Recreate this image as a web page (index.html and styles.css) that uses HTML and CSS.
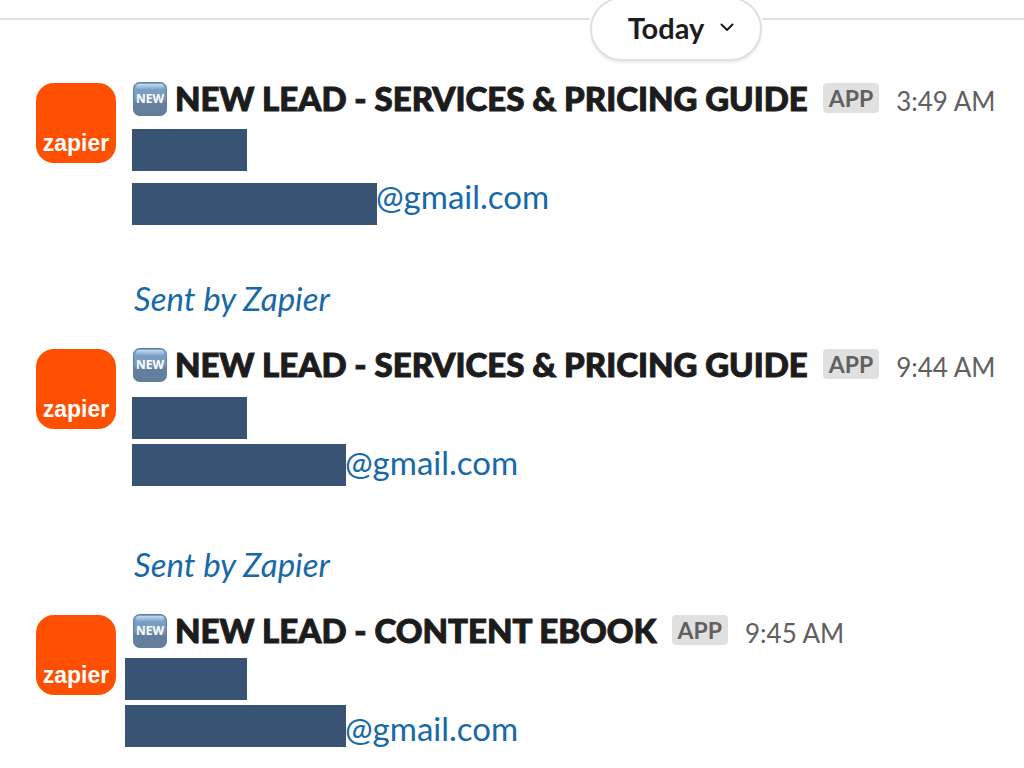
FILE: index.html
```html
<!DOCTYPE html>
<html lang="en">
<head>
<meta charset="utf-8">
<meta name="viewport" content="width=device-width, initial-scale=1">
<title>Lead notifications</title>
<link rel="stylesheet" href="styles.css">
</head>
<body>
<svg class="defs" width="0" height="0" aria-hidden="true">
  <defs>
    <linearGradient id="emoji-face" x1="0" y1="0" x2="0" y2="1">
      <stop offset="0" stop-color="#7ba3cb"/>
      <stop offset="0.5" stop-color="#7899bd"/>
      <stop offset="0.62" stop-color="#64809f"/>
      <stop offset="1" stop-color="#647c98"/>
    </linearGradient>
    <linearGradient id="emoji-shine" x1="0" y1="0" x2="0" y2="1">
      <stop offset="0" stop-color="#c4d9ea"/>
      <stop offset="1" stop-color="#84aacf"/>
    </linearGradient>
  </defs>
</svg>
<header class="day">
  <button class="day-button" type="button">
    <span>Today</span>
    <svg class="chevron" viewBox="0 0 14 9" aria-hidden="true"><path d="M1.500 1.500l5.500 5.500 5.500-5.500"/></svg>
  </button>
</header>
<main class="messages">
  <article class="message">
    <div class="avatar">zapier</div>
    <div class="body">
      <div class="heading">
        <svg class="emoji" viewBox="0 0 34 34" role="img" aria-label="new"><rect x="0.5" y="0.5" width="33" height="33" rx="6" fill="url(#emoji-face)" stroke="#607e9e"/><rect x="3" y="2" width="28" height="5" rx="2.5" fill="url(#emoji-shine)"/><text x="17" y="21" class="emoji-text">NEW</text></svg>
        <h2 class="title">NEW LEAD - SERVICES &amp; PRICING GUIDE</h2>
        <span class="badge">APP</span>
        <time class="time">3:49 AM</time>
      </div>
      <div class="name name-mid"><span class="redacted w-short"></span></div>
      <div class="email email-low"><span class="redacted w-long"></span><a class="link" href="#">@gmail.com</a></div>
      <a class="link sent" href="#">Sent by Zapier</a>
    </div>
  </article>
  <article class="message">
    <div class="avatar">zapier</div>
    <div class="body">
      <div class="heading">
        <svg class="emoji" viewBox="0 0 34 34" role="img" aria-label="new"><rect x="0.5" y="0.5" width="33" height="33" rx="6" fill="url(#emoji-face)" stroke="#607e9e"/><rect x="3" y="2" width="28" height="5" rx="2.5" fill="url(#emoji-shine)"/><text x="17" y="21" class="emoji-text">NEW</text></svg>
        <h2 class="title">NEW LEAD - SERVICES &amp; PRICING GUIDE</h2>
        <span class="badge">APP</span>
        <time class="time">9:44 AM</time>
      </div>
      <div class="name name-low"><span class="redacted w-short"></span></div>
      <div class="email email-mid"><span class="redacted w-medium"></span><a class="link" href="#">@gmail.com</a></div>
      <a class="link sent" href="#">Sent by Zapier</a>
    </div>
  </article>
  <article class="message">
    <div class="avatar">zapier</div>
    <div class="body">
      <div class="heading">
        <svg class="emoji" viewBox="0 0 34 34" role="img" aria-label="new"><rect x="0.5" y="0.5" width="33" height="33" rx="6" fill="url(#emoji-face)" stroke="#607e9e"/><rect x="3" y="2" width="28" height="5" rx="2.5" fill="url(#emoji-shine)"/><text x="17" y="21" class="emoji-text">NEW</text></svg>
        <h2 class="title">NEW LEAD - CONTENT EBOOK</h2>
        <span class="badge">APP</span>
        <time class="time">9:45 AM</time>
      </div>
      <div class="name name-high outdent"><span class="redacted w-name"></span></div>
      <div class="email outdent"><span class="redacted w-email"></span><a class="link" href="#">@gmail.com</a></div>
    </div>
  </article>
</main>
</body>
</html>
```
FILE: styles.css
```css
* { box-sizing: border-box; }

body {
  margin: 0;
  background: #fff;
  color: #1d1c1d;
  font-family: Lato, "Liberation Sans", sans-serif;
  overflow-x: hidden;
}

.defs { position: absolute; }

.day {
  display: flex;
  align-items: flex-start;
  height: 60px;
}

.day::before,
.day::after {
  content: "";
  height: 2px;
  margin-top: 18px;
  background: #e0e0e0;
}

.day::before { flex: 590; }
.day::after { flex: 262; }

.day-button {
  display: flex;
  align-items: center;
  justify-content: center;
  gap: 16px;
  width: 172px;
  height: 64px;
  margin-top: -3px;
  padding: 0 0 2px 10px;
  border: 2px solid #e0e0e0;
  border-radius: 32px;
  background: #fff;
  box-shadow: 0 2px 3px rgba(0, 0, 0, 0.08);
  color: #1d1c1d;
  font: 700 29px/36px Lato, "Liberation Sans", sans-serif;
}

.chevron {
  width: 14px;
  height: 9px;
  margin-bottom: 2px;
  fill: none;
  stroke: #1d1c1d;
  stroke-width: 2;
  stroke-linecap: round;
  stroke-linejoin: round;
}

.messages { padding: 22px 24px 0 36px; }

.message {
  display: flex;
  gap: 16px;
  margin-bottom: 28px;
}

.message:last-child { margin-bottom: 0; }

.avatar {
  display: flex;
  flex: none;
  align-items: flex-end;
  justify-content: center;
  width: 80px;
  height: 80px;
  margin-top: 1px;
  padding-bottom: 5px;
  border-radius: 18px;
  background: #ff4f00;
  color: #fff;
  font: 700 23px/30px "Liberation Sans", Arial, sans-serif;
}

.body {
  flex: 1;
  min-width: 0;
}

.heading {
  display: flex;
  align-items: center;
  height: 34px;
  padding-left: 1px;
  white-space: nowrap;
}

.emoji {
  flex: none;
  width: 34px;
  height: 34px;
  margin-right: 8px;
}

.emoji-text {
  fill: #fff;
  font: 700 12px "Open Sans", sans-serif;
  text-anchor: middle;
}

.title {
  margin: 0 0 2px;
  font-size: 33px;
  font-weight: 900;
  line-height: 34px;
  -webkit-text-stroke: 1px #1d1c1d;
}

.badge {
  margin: 0 17px 2px 15px;
  padding: 0 6px;
  border-radius: 4px;
  background: #e0e0e0;
  color: #616061;
  font-size: 23px;
  font-weight: 700;
  line-height: 30px;
}

.time {
  margin-top: 4px;
  color: #616061;
  font-size: 26px;
  line-height: 32px;
}

.redacted {
  flex: none;
  height: 42px;
  background: #385373;
}

.name {
  display: flex;
  height: 56px;
}

.name-high { padding-top: 10px; }
.name-mid { padding-top: 13px; }
.name-low { padding-top: 15px; }

.email {
  display: flex;
  align-items: flex-start;
  height: 52px;
}

.email .redacted { margin-top: 1px; }
.email-mid .redacted { margin-top: 6px; }
.email-low .redacted { margin-top: 11px; }

.outdent { margin-left: -7px; }

.w-short { width: 115px; }
.w-name { width: 122px; }
.w-medium { width: 214px; }
.w-email { width: 221px; }
.w-long { width: 245px; }

.link {
  margin-left: -1px;
  color: #1769a8;
  font-size: 33px;
  line-height: 48px;
  text-decoration: none;
}

.sent {
  display: block;
  width: fit-content;
  margin: 52px 0 0 2px;
  font-style: italic;
  line-height: 44px;
}
```
